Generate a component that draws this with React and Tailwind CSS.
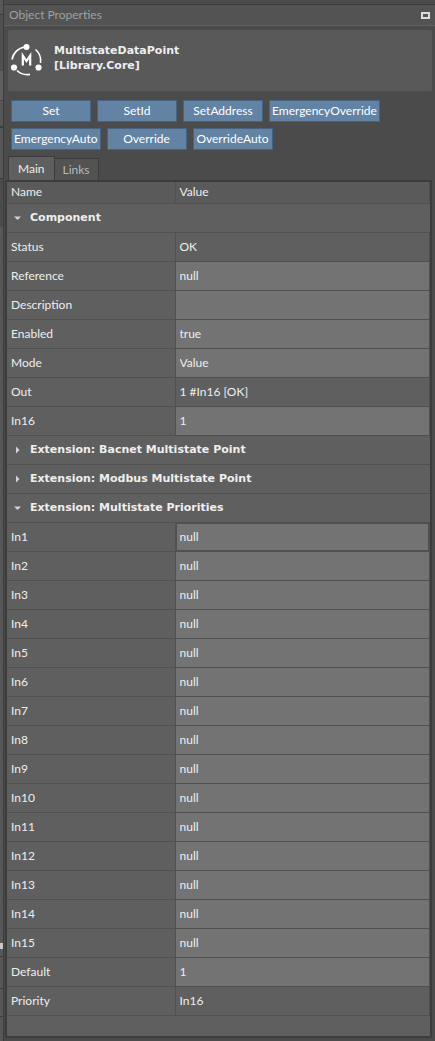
import { useState } from "react";

const actions = ["Set", "SetId", "SetAddress", "EmergencyOverride", "EmergencyAuto", "Override", "OverrideAuto"];

const priorityRows = Array.from({ length: 15 }, (_, i) => ({ name: `In${i + 1}`, value: "null", editable: true }));

const groups = [
  {
    title: "Component",
    open: true,
    rows: [
      { name: "Status", value: "OK" },
      { name: "Reference", value: "null", editable: true },
      { name: "Description", value: "", editable: true },
      { name: "Enabled", value: "true", editable: true },
      { name: "Mode", value: "Value", editable: true },
      { name: "Out", value: "1 #In16 [OK]" },
      { name: "In16", value: "1", editable: true },
    ],
  },
  { title: "Extension: Bacnet Multistate Point", open: false, rows: [] },
  { title: "Extension: Modbus Multistate Point", open: false, rows: [] },
  {
    title: "Extension: Multistate Priorities",
    open: true,
    rows: [
      ...priorityRows,
      { name: "Default", value: "1", editable: true },
      { name: "Priority", value: "In16" },
    ],
  },
];

const PointIcon = () => (
  <svg className="h-9 w-9 shrink-0" viewBox="0 0 36 36" fill="none" stroke="#fff" aria-hidden="true">
    <path d="M2 16.5A15 15 0 0 1 15 4M25.5 6.5A15 15 0 0 1 30.5 20M7 27.5A15 15 0 0 0 20 31.4" strokeWidth="1.6" />
    <path d="M12.8 22.5V12.5L16.5 18L20.2 12.5V22.5" strokeWidth="2.2" />
    <g fill="#fff" stroke="none">
      <circle cx="16.5" cy="4" r="3" />
      <circle cx="4" cy="24.5" r="3.1" />
      <circle cx="28.5" cy="24.5" r="3.1" />
    </g>
  </svg>
);

const Arrow = ({ open }) => (
  <svg className="h-2 w-2 shrink-0" viewBox="0 0 8 8" fill="#d4d4d4" aria-hidden="true">
    {open ? <path d="M1 2.5H8L4.5 6Z" /> : <path d="M3 0.5V7.5L6.5 4Z" />}
  </svg>
);

// Sliver of the neighbouring panel, with its row lines
const PanelEdge = () => (
  <div className="flex w-1 shrink-0 flex-col border-r border-[#3c3c3c] bg-[#575757]" aria-hidden="true">
    <div className="h-[15px] border-b border-[#3c3c3c]" />
    <div className="h-14 bg-[#505050]" />
    <div className="h-[30px] border-b border-[#454545] bg-[#5f5f5f]" />
    <div className="h-[27px] border-b-2 border-[#3c3c3c]" />
    <div className="h-[51px] border-b border-[#3c3c3c]" />
    <div className="h-12 bg-[#4b4b4b]" />
    <div className="grow" />
    <div className="h-[6px] bg-[#c8c8c8]" />
    <div className="h-2 border-b border-[#3c3c3c]" />
    <div className="h-8 border-b border-[#3c3c3c]" />
    <div className="h-7 border-b border-[#3c3c3c]" />
    <div className="h-6" />
  </div>
);

const PropertyRow = ({ row }) => {
  const [value, setValue] = useState(row.value);

  return (
    <tr className="h-[29px] border-b border-[#505050]">
      <td className="border-r border-[#505050] px-1 py-0">{row.name}</td>
      <td className={row.editable ? "border-r border-[#505050] bg-[#737373] p-0" : "border-r border-[#505050] px-1 py-0"}>
        {row.editable ? (
          <input
            type="text"
            aria-label={row.name}
            value={value}
            onChange={(e) => setValue(e.target.value)}
            className={
              row.name === "In1"
                ? "block h-7 w-full border border-[#505050] bg-transparent px-[3px] outline-none"
                : "block h-7 w-full bg-transparent px-1 outline-none"
            }
          />
        ) : (
          row.value
        )}
      </td>
    </tr>
  );
};

const PropertyGroup = ({ group }) => {
  const [open, setOpen] = useState(group.open);

  return (
    <tbody>
      <tr className="h-[29px] border-b border-[#505050]">
        <td colSpan={2} className="p-0">
          <button
            type="button"
            aria-expanded={open}
            onClick={() => setOpen(!open)}
            className="flex h-7 w-full items-center gap-2 px-1.5 text-left font-['DejaVu_Sans',sans-serif] text-[11px] font-bold"
          >
            <Arrow open={open} />
            <span className="pt-0.5 pl-px">{group.title}</span>
          </button>
        </td>
      </tr>
      {open && group.rows.map((row) => <PropertyRow key={row.name} row={row} />)}
    </tbody>
  );
};

export default function App() {
  const [tab, setTab] = useState("Main");

  return (
    <div className="flex min-h-screen bg-[#4b4b4b] font-['Lato',sans-serif] text-xs text-[#eeeeee]">
      <PanelEdge />

      <div className="flex min-w-0 grow flex-col">
        {/* Title bar */}
        <header className="mt-1 flex h-[22px] items-center justify-between border-t border-b border-t-[#3c3c3c] border-b-[#626262] bg-[#535353] px-[5px]">
          <h1 className="text-[#a0a0a0]">Object Properties</h1>
          <button type="button" aria-label="Maximize" className="h-[7px] w-[9px] border-2 border-[#dcdcdc]" />
        </header>

        {/* Selected component */}
        <section className="mt-1 mr-[3px] ml-1 flex h-[61px] items-center gap-2 rounded-xs bg-[#595959] pl-[2px]">
          <PointIcon />
          <div className="pb-1.5 font-['DejaVu_Sans',sans-serif] text-[11px] leading-[15px] font-bold">
            <p>MultistateDataPoint</p>
            <p>[Library.Core]</p>
          </div>
        </section>

        {/* Actions */}
        <div className="mt-[9px] flex flex-wrap gap-1.5 pr-12 pl-[7px]">
          {actions.map((action) => (
            <button
              key={action}
              type="button"
              className="h-[22px] min-w-20 border border-[#48637f] bg-[#6283a3] px-0.5 text-white"
            >
              {action}
            </button>
          ))}
        </div>

        {/* Tabs */}
        <div role="tablist" className="mt-1.5 flex items-end pl-1">
          {["Main", "Links"].map((name) => (
            <button
              key={name}
              type="button"
              role="tab"
              aria-selected={tab === name}
              onClick={() => setTab(name)}
              className={
                tab === name
                  ? "h-6 border border-b-0 border-[#3c3c3c] bg-[#5f5f5f] px-[9px]"
                  : "h-[22px] border border-b-0 border-l-0 border-[#3c3c3c] bg-[#535353] px-2 text-[#b8b8b8]"
              }
            >
              {name}
            </button>
          ))}
        </div>

        {/* Property sheet */}
        <div className="mr-[3px] mb-[3px] ml-px grow border-2 border-[#3c3c3c] bg-[#5f5f5f]">
          {tab === "Main" && (
            <table className="w-full table-fixed border-collapse text-left">
              <thead>
                <tr className="h-[21px] border-b border-[#505050] bg-[#5a5a5a]">
                  <th className="w-[168px] border-r border-[#505050] px-1 py-0 font-normal">Name</th>
                  <th className="border-r border-[#505050] px-1 py-0 font-normal">Value</th>
                </tr>
              </thead>
              {groups.map((group) => (
                <PropertyGroup key={group.title} group={group} />
              ))}
            </table>
          )}
        </div>
      </div>
    </div>
  );
}
